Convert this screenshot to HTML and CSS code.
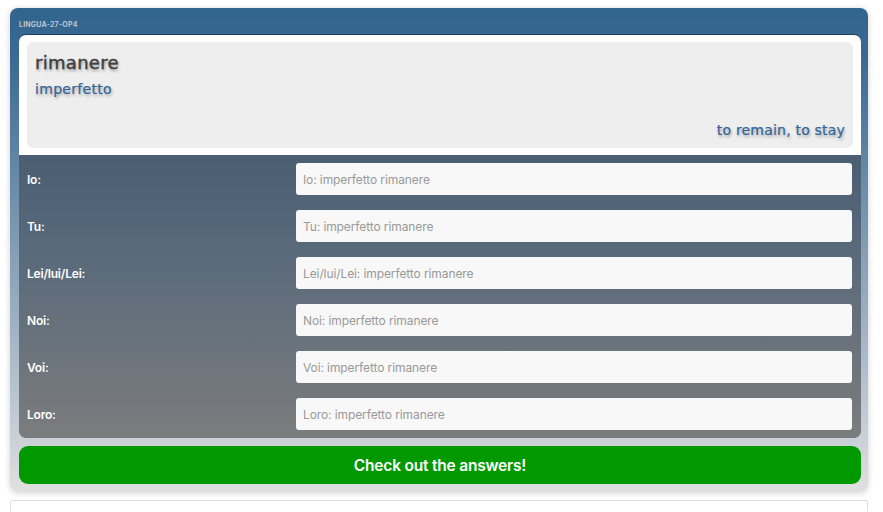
FILE: index.html
```html
<!DOCTYPE html>
<html lang="it">
<head>
    <meta charset="UTF-8">
    <meta name="viewport" content="width=device-width, initial-scale=1.0">
    <title>Lingua - rimanere</title>
    <link rel="stylesheet" href="styles.css">
</head>
<body>
    <div class="exercise">
        <div class="exercise-id">LINGUA-27-OP4</div>

        <div class="panel">
            <div class="verb-head">
                <div class="verb-box">
                    <div class="verb">rimanere</div>
                    <div class="tense">imperfetto</div>
                    <div class="meaning">to remain, to stay</div>
                </div>
            </div>

            <form class="conjugation" id="conjugationForm">
                <div class="row">
                    <label for="p1">Io:</label>
                    <input type="text" id="p1" placeholder="Io: imperfetto rimanere">
                </div>
                <div class="row">
                    <label for="p2">Tu:</label>
                    <input type="text" id="p2" placeholder="Tu: imperfetto rimanere">
                </div>
                <div class="row">
                    <label for="p3">Lei/lui/Lei:</label>
                    <input type="text" id="p3" placeholder="Lei/lui/Lei: imperfetto rimanere">
                </div>
                <div class="row">
                    <label for="p4">Noi:</label>
                    <input type="text" id="p4" placeholder="Noi: imperfetto rimanere">
                </div>
                <div class="row">
                    <label for="p5">Voi:</label>
                    <input type="text" id="p5" placeholder="Voi: imperfetto rimanere">
                </div>
                <div class="row">
                    <label for="p6">Loro:</label>
                    <input type="text" id="p6" placeholder="Loro: imperfetto rimanere">
                </div>
            </form>
        </div>

        <button type="submit" form="conjugationForm" class="check">Check out the answers!</button>
    </div>

    <div class="next-box"></div>
</body>
</html>
```

FILE: styles.css
```css
body {
    font-family: Inter, "Liberation Sans", sans-serif;
    background-color: #fff;
    color: #333;
    margin: 0;
    padding: 8px 15px 0 10px;
}

.exercise {
    background: linear-gradient(to bottom, #31648e 0%, #3a6a92 10%, #c8cfd7 88%, #e0e0e0 100%);
    border-radius: 8px;
    padding: 8px 7px 8px 9px;
    box-shadow: 0 1px 6px rgba(0, 0, 0, 0.18);
}

.exercise-id {
    font-size: 7px;
    font-weight: 700;
    color: #b9c6d3;
    height: 18px;
    line-height: 18px;
    letter-spacing: 0.2px;
}

.panel {
    border-radius: 7px;
    overflow: hidden;
    background: linear-gradient(to bottom, #3b4e62 0%, #56687a 50%, #7b7c7d 100%);
}

.verb-head {
    background-color: #fff;
    border-top: 1px solid #203d58;
    border-radius: 7px 7px 0 0;
    padding: 7px 8px 7px 8px;
}

.verb-box {
    background-color: #eee;
    border-radius: 6px;
    height: 106px;
    box-sizing: border-box;
    padding: 9px 8px 10px 8px;
    display: flex;
    flex-direction: column;
    font-family: "DejaVu Sans", sans-serif;
}

.verb {
    font-size: 18px;
    color: #3e3e3e;
    letter-spacing: 0.3px;
    -webkit-text-stroke: 0.4px #3e3e3e;
    text-shadow: 1px 2px 3px rgba(0, 0, 0, 0.4);
    line-height: 24px;
}

.tense {
    font-size: 14px;
    color: #336699;
    letter-spacing: 0.3px;
    -webkit-text-stroke: 0.2px #336699;
    text-shadow: 1px 2px 3px rgba(0, 0, 0, 0.35);
    margin-top: 6px;
}

.meaning {
    margin-top: auto;
    text-align: right;
    font-size: 14px;
    color: #336699;
    letter-spacing: 0.2px;
    -webkit-text-stroke: 0.2px #336699;
    text-shadow: 1px 2px 3px rgba(0, 0, 0, 0.35);
}

.conjugation {
    padding: 8px 9px 8px 8px;
    display: flex;
    flex-direction: column;
    gap: 15px;
}

.row {
    display: flex;
    align-items: center;
}

.row label {
    width: 269px;
    color: #fff;
    font-size: 12px;
    font-weight: 600;
    letter-spacing: -0.2px;
}

.row input {
    flex: 1;
    height: 32px;
    box-sizing: border-box;
    border: none;
    border-radius: 3px;
    background-color: #f8f8f8;
    padding: 0 7px;
    font-family: inherit;
    font-size: 12px;
    letter-spacing: -0.1px;
    color: #333;
}

.row input::placeholder {
    color: #999;
}

.check {
    display: block;
    width: 100%;
    margin-top: 8px;
    height: 38px;
    border: none;
    border-radius: 9px;
    background-color: #009900;
    color: #fff;
    font-family: inherit;
    font-size: 15.5px;
    font-weight: 600;
    letter-spacing: -0.2px;
    cursor: pointer;
}

.check:hover {
    background-color: #008800;
}

.next-box {
    margin-top: 8px;
    height: 10px;
    border: 1px solid #ddd;
    border-bottom: none;
    border-radius: 2px 2px 0 0;
}
```
